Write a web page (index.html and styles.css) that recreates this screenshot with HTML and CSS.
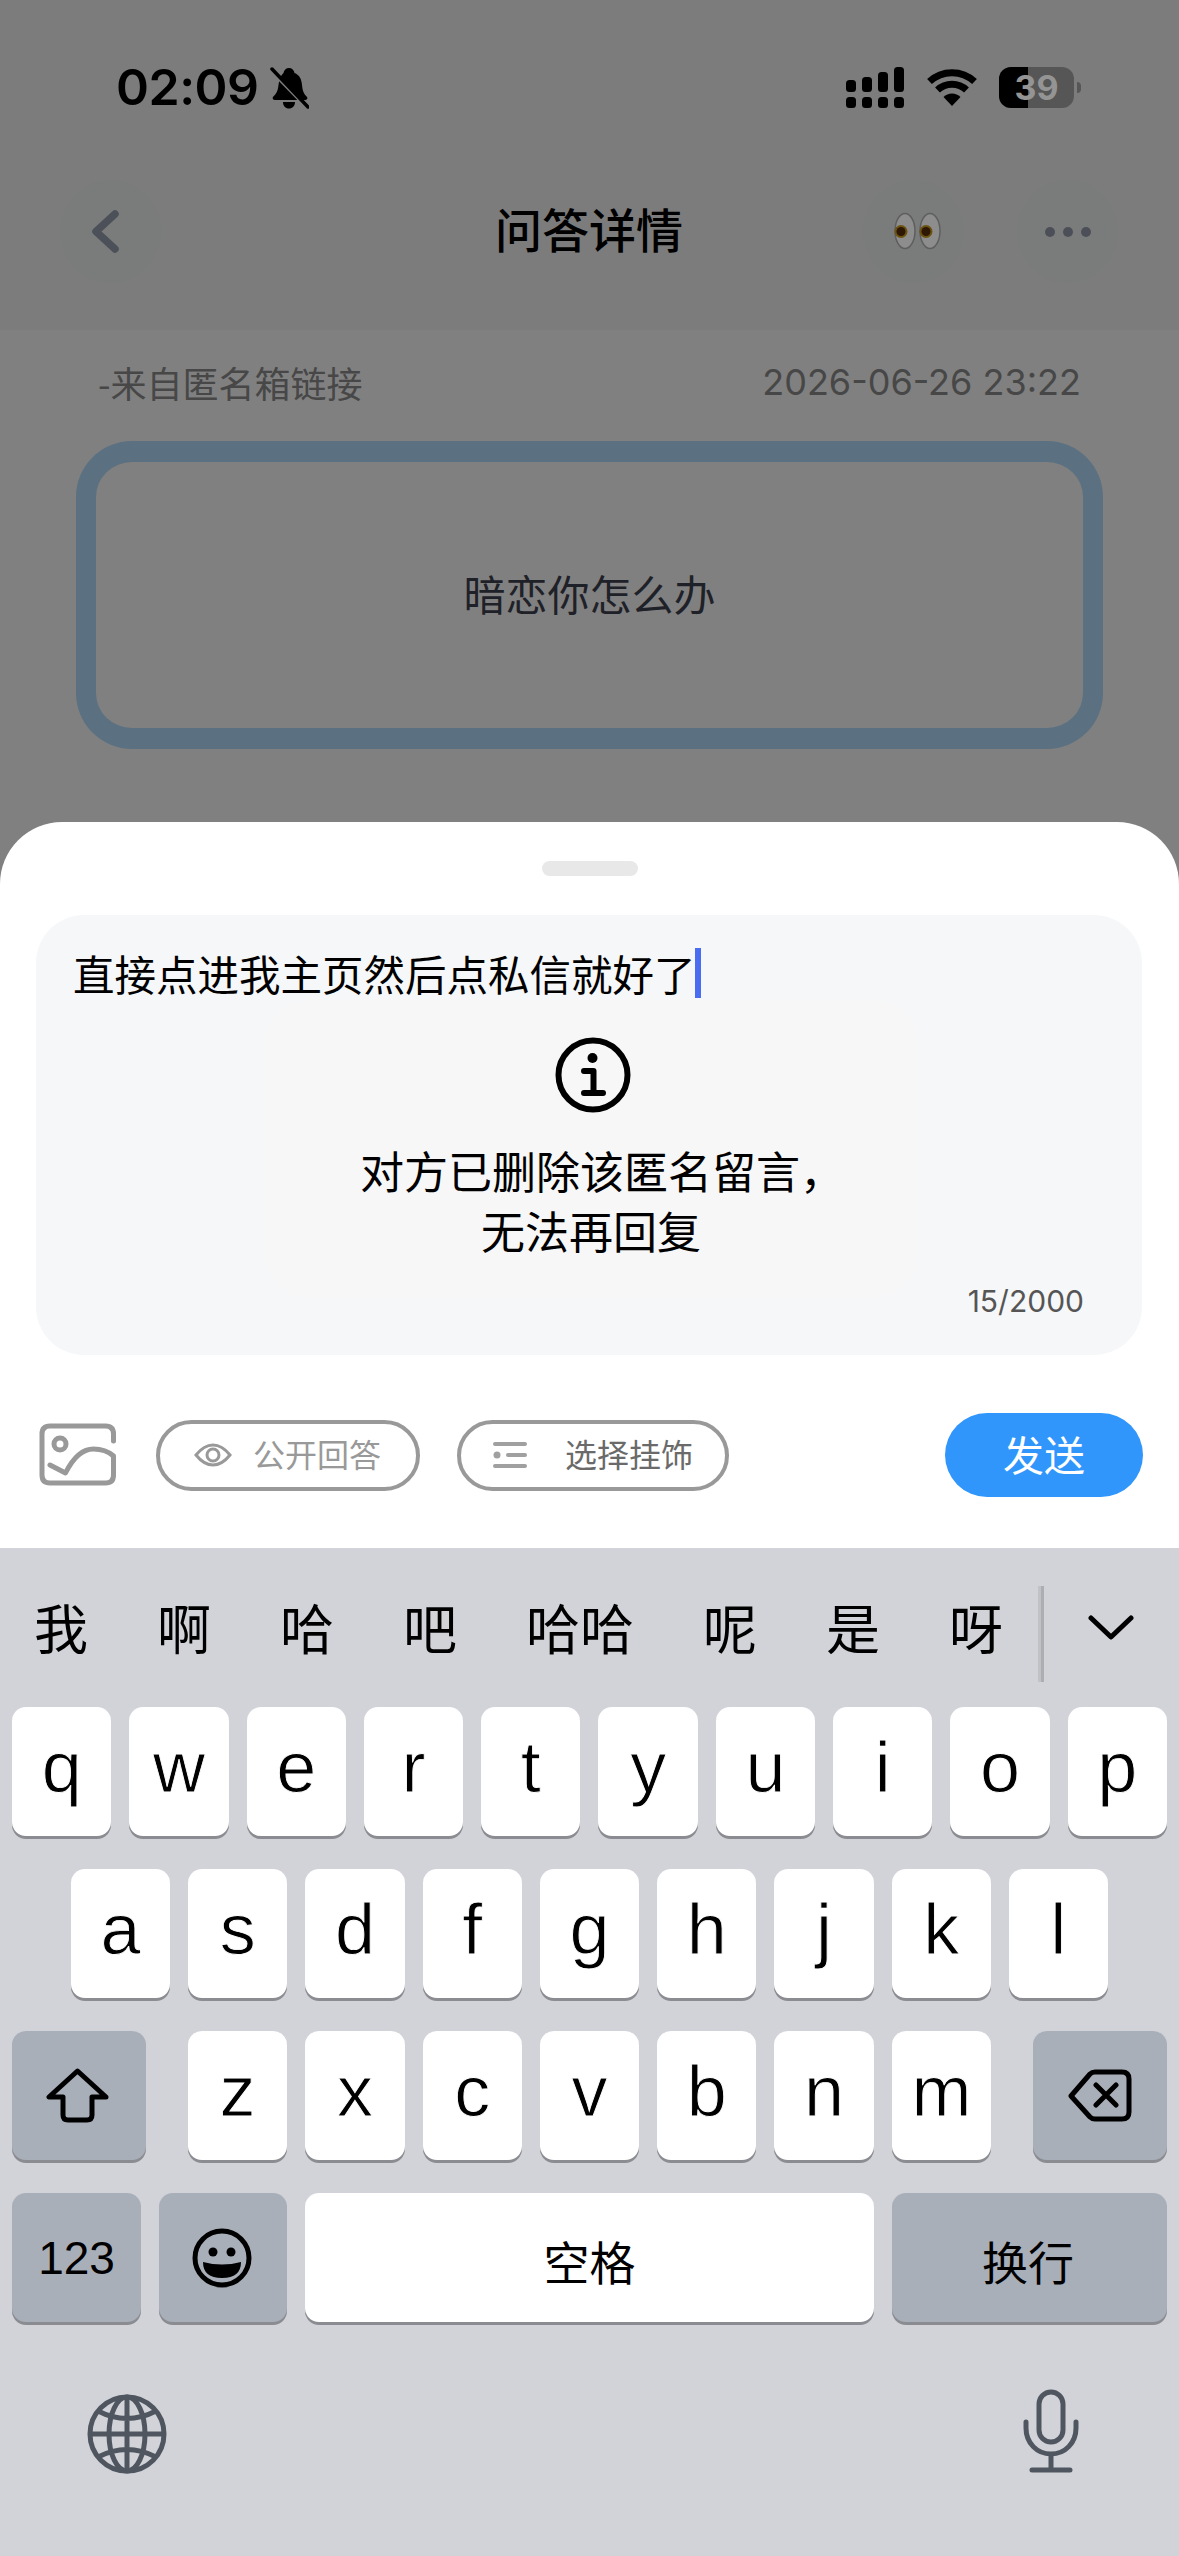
FILE: index.html
```html
<!DOCTYPE html>
<html lang="zh-CN">
<head>
<meta charset="utf-8">
<title>问答详情</title>
<link rel="stylesheet" href="styles.css">
</head>
<body>
<header class="top">
  <div class="statusbar">
    <div class="status-left">
      <span class="time">02:09</span>
      <svg class="bell" viewBox="0 0 39 42"><path d="M19 1c3 0 5 2 5.500 5 5 2 7 6 7.500 12 .5 6 2 9 5 12 1 1.500 0 3-2 3H5c-2 0-3-1.500-2-3 3-3 5-6 5.500-12C9 12 11 8 13.500 6 14 3 16 1 19 1zM13 35h12c0 4-2.500 6.500-6 6.500S13 39 13 35z"/><path class="bell-gap" d="M-1 1l37 38"/><path class="bell-slash" d="M2 2l36 38"/></svg>
    </div>
    <div class="status-right">
      <svg class="signal" viewBox="0 0 58 41"><rect x="0" y="13" width="10" height="12" rx="3.500"/><rect x="16" y="10" width="10" height="15" rx="3.500"/><rect x="32" y="5" width="10" height="20" rx="3.500"/><rect x="48" y="0" width="10" height="25" rx="3.500"/><rect x="0" y="30" width="10" height="11" rx="3.500"/><rect x="16" y="30" width="10" height="11" rx="3.500"/><rect x="32" y="30" width="10" height="11" rx="3.500"/><rect x="48" y="30" width="10" height="11" rx="3.500"/></svg>
      <svg class="wifi" viewBox="0 0 50 37"><path class="wifi-arc" d="M2.500 12.500a33 33 0 0 1 45 0"/><path class="wifi-arc" d="M10.500 21a21 21 0 0 1 29 0"/><path d="M25 37L16.500 28a12 12 0 0 1 17 0z"/></svg>
      <div class="battery"><div class="battery-body"><div class="battery-fill"></div><span class="battery-num">39</span></div><div class="battery-nub"></div></div>
    </div>
  </div>
  <nav class="nav">
    <div class="nav-side">
      <div class="round">
        <svg class="back" viewBox="0 0 28 43"><path d="M24 4L5 21.500 24 39"/></svg>
      </div>
    </div>
    <h1 class="title">问答详情</h1>
    <div class="nav-side nav-right">
      <div class="round">
        <svg class="eyes" viewBox="0 0 48 38"><ellipse class="eye-white" cx="11" cy="19" rx="10" ry="17.500"/><ellipse class="eye-white" cx="36" cy="19" rx="10" ry="17.500"/><circle class="iris" cx="7" cy="19.500" r="6.500"/><circle class="iris" cx="32" cy="19.500" r="6.500"/><circle class="pupil" cx="7" cy="19.500" r="4.500"/><circle class="pupil" cx="32" cy="19.500" r="4.500"/></svg>
      </div>
      <div class="round">
        <div class="dots"><i></i><i></i><i></i></div>
      </div>
    </div>
  </nav>
</header>

<main class="main">
  <div class="meta"><span>-来自匿名箱链接</span><span class="date">2026-06-26 23:22</span></div>
  <div class="card"><span class="card-text">暗恋你怎么办</span></div>
</main>

<section class="sheet">
  <div class="handle"></div>
  <div class="editor">
    <div class="editor-text"><span>直接点进我主页然后点私信就好了</span><i class="caret"></i></div>
    <div class="counter">15/2000</div>
    <div class="toast">
      <svg class="info" viewBox="0 0 76 76"><circle cx="38" cy="38" r="34.500"/><circle class="info-dot" cx="37.500" cy="21" r="5"/><path d="M29 34h9.500v22M29 56h19"/></svg>
      <p>对方已删除该匿名留言，<br>无法再回复</p>
    </div>
  </div>
  <div class="toolbar">
    <svg class="image-icon" viewBox="0 0 77 63"><path d="M74.500 18V11q0-8-8-8H11q-8 0-8 8v41q0 8 8 8h55.500q8 0 8-8V33q-8-7-20-7-16 0-28 24L11 42"/><circle cx="21" cy="21" r="6"/></svg>
    <div class="pill pill-public">
      <svg class="eye-icon" viewBox="0 0 38 24"><path d="M2 12Q10 2 19 2t17 10Q28 22 19 22T2 12z"/><circle cx="19" cy="12" r="6"/></svg>
      <span class="pill-text">公开回答</span>
    </div>
    <div class="pill pill-deco">
      <svg class="list-icon" viewBox="0 0 34 26"><rect x="0" y="0" width="34" height="4" rx="2"/><circle cx="4" cy="13" r="3.500"/><rect x="13" y="11" width="21" height="4" rx="2"/><rect x="0" y="22" width="34" height="4" rx="2"/></svg>
      <span class="pill-text">选择挂饰</span>
    </div>
    <div class="send"><span class="pill-text">发送</span></div>
  </div>
</section>

<section class="keyboard">
  <div class="candidates">
    <span>我</span><span>啊</span><span>哈</span><span>吧</span><span>哈哈</span><span>呢</span><span>是</span><span>呀</span>
    <i class="cand-divider"></i>
    <svg class="chevron" viewBox="0 0 46 25"><path d="M3 3l20 19L43 3"/></svg>
  </div>
  <div class="row row-1">
    <div class="key">q</div><div class="key">w</div><div class="key">e</div><div class="key">r</div><div class="key">t</div><div class="key">y</div><div class="key">u</div><div class="key">i</div><div class="key">o</div><div class="key">p</div>
  </div>
  <div class="row row-2">
    <div class="key">a</div><div class="key">s</div><div class="key">d</div><div class="key">f</div><div class="key">g</div><div class="key">h</div><div class="key">j</div><div class="key">k</div><div class="key">l</div>
  </div>
  <div class="row row-3">
    <div class="key key-dark key-side">
      <svg class="shift" viewBox="0 0 63 55"><path d="M31.500 3L3 29H17V47q0 5 5 5H41q5 0 5-5V29H60z"/></svg>
    </div>
    <div class="letters">
      <div class="key">z</div><div class="key">x</div><div class="key">c</div><div class="key">v</div><div class="key">b</div><div class="key">n</div><div class="key">m</div>
    </div>
    <div class="key key-dark key-side">
      <svg class="delete" viewBox="0 0 64 53"><path d="M3 27L22 5q2-2 5-2H54q7 0 7 7V43q0 7-7 7H27q-3 0-5-2zM28 16l20 20M48 16L28 36"/></svg>
    </div>
  </div>
  <div class="row row-4">
    <div class="key key-dark key-123">123</div>
    <div class="key key-dark key-emoji">
      <svg class="smile" viewBox="0 0 60 60"><circle cx="30" cy="30" r="27"/><circle class="smile-fill" cx="21" cy="24" r="4.500"/><circle class="smile-fill" cx="39" cy="24" r="4.500"/><path class="smile-fill" d="M11 34q19 5 38 0q0 16-19 16T11 34z"/></svg>
    </div>
    <div class="key key-space">空格</div>
    <div class="key key-dark key-return">换行</div>
  </div>
  <div class="kb-footer">
    <svg class="globe" viewBox="0 0 80 80"><circle cx="40" cy="40" r="37"/><ellipse cx="40" cy="40" rx="18" ry="37"/><path d="M40 3V77M3 40H77M11 17q29 15 58 0M11 63q29-15 58 0"/></svg>
    <svg class="mic" viewBox="0 0 56 84"><rect x="16" y="3" width="24" height="50" rx="12"/><path d="M3 33v6c0 15 11 26 25 26s25-11 25-26v-6M28 65v16M9 81h38"/></svg>
  </div>
</section>
</body>
</html>
```

FILE: styles.css
```css
* { box-sizing: border-box; }
html, body { margin: 0; padding: 0; }
body {
  width: 1179px;
  height: 2556px;
  overflow: hidden;
  display: flex;
  flex-direction: column;
  background: #808080;
  font-family: "Noto Sans CJK SC", "Inter", sans-serif;
  color: #000;
}

/* header */
.top { height: 330px; background: #7c7c7c; }
.statusbar {
  height: 180px;
  padding: 67px 98px 0 116px;
  display: flex;
  justify-content: space-between;
  align-items: flex-start;
}
.status-left { display: flex; align-items: flex-start; gap: 11px; }
.time {
  font-family: "Inter", sans-serif;
  font-size: 50px;
  font-weight: 600;
  line-height: 41px;
  letter-spacing: -0.5px;
}
.bell { width: 39px; height: 42px; }
.bell-gap { stroke: #7c7c7c; stroke-width: 4; fill: none; }
.bell-slash { stroke: #000; stroke-width: 3.500; fill: none; stroke-linecap: round; }
.status-right { display: flex; align-items: flex-start; }
.signal { width: 58px; height: 41px; margin-right: 23px; }
.wifi { width: 50px; height: 37px; margin: 2px 22px 0 0; }
.wifi-arc { fill: none; stroke: #000; stroke-width: 7; }
.battery { display: flex; align-items: center; }
.battery-body {
  position: relative;
  width: 75px;
  height: 41px;
  border-radius: 12px;
  background: #565656;
  overflow: hidden;
  display: flex;
  align-items: center;
  justify-content: center;
}
.battery-fill { position: absolute; left: 0; top: 0; bottom: 0; width: 29px; background: #000; }
.battery-num {
  position: relative;
  font-family: "Inter", sans-serif;
  font-size: 34px;
  font-weight: 700;
  line-height: 41px;
  color: #949494;
}
.battery-nub { width: 4px; height: 11px; margin-left: 3px; background: #565656; border-radius: 0 5px 5px 0; }

.nav {
  height: 103px;
  padding: 0 61px 0 60px;
  display: grid;
  grid-template-columns: 1fr auto 1fr;
  align-items: center;
}
.nav-side { display: flex; }
.nav-right { justify-content: flex-end; gap: 53px; }
.round {
  width: 101px;
  height: 103px;
  border-radius: 50%;
  background: #7a7c7c;
  display: flex;
  align-items: center;
  justify-content: center;
}
.back { width: 28px; height: 43px; margin-left: -12px; }
.back path { fill: none; stroke: #4c5058; stroke-width: 7.500; stroke-linecap: round; stroke-linejoin: round; }
.title { margin: 0 0 7px; font-size: 47px; font-weight: 500; line-height: 60px; color: #000; }
.eyes { width: 48px; height: 38px; margin: -2px 0 0 9px; }
.eye-white { fill: #8d8d8d; stroke: #5e5e5e; stroke-width: 1.500; }
.iris { fill: #6d5310; }
.pupil { fill: #2e1803; }
.dots { display: flex; gap: 8px; }
.dots i { width: 10px; height: 10px; border-radius: 50%; background: #4d4f58; }

/* main */
.main { height: 492px; padding-top: 32px; }
.meta {
  height: 40px;
  padding: 0 98px;
  display: flex;
  justify-content: space-between;
  align-items: center;
  font-size: 36px;
  line-height: 40px;
  color: #474747;
}
.date { font-family: "Inter", sans-serif; font-size: 36px; }
.card {
  margin: 39px 76px 0;
  height: 308px;
  border: solid #5b7080;
  border-width: 21px 20px;
  border-radius: 56px;
  display: flex;
  align-items: center;
  justify-content: center;
  font-size: 42px;
  color: #1f2128;
}
.card-text { margin-bottom: 6px; }

/* sheet */
.sheet {
  height: 726px;
  background: #fff;
  border-radius: 62px 62px 0 0;
  padding-top: 39px;
}
.handle { width: 96px; height: 15px; margin: 0 auto; border-radius: 8px; background: #e8e8e8; }
.editor {
  position: relative;
  margin: 39px 37px 0 36px;
  height: 440px;
  border-radius: 48px;
  background: #f6f7f9;
  padding: 33px 58px 0 37px;
  display: flex;
  flex-direction: column;
}
.editor-text {
  display: flex;
  align-items: center;
  font-size: 41.500px;
  line-height: 50px;
  color: #000;
}
.caret { width: 6px; height: 50px; margin-left: -1px; background: #4a6cf0; }
.counter {
  margin-top: auto;
  margin-bottom: 41px;
  text-align: right;
  font-family: "Inter", sans-serif;
  font-size: 30px;
  line-height: 26px;
  color: #555;
}
.toast {
  position: absolute;
  left: 229px;
  top: 84px;
  width: 652px;
  height: 299px;
  border-radius: 44px;
  background: #f7f7f7;
  display: flex;
  flex-direction: column;
  align-items: center;
  padding-top: 38px;
}
.info { width: 76px; height: 76px; margin-left: 3px; fill: none; stroke: #000; stroke-width: 6; stroke-linecap: round; stroke-linejoin: round; }
.info-dot { fill: #000; stroke: none; }
.toast p { margin: 27px 0 0; text-align: center; text-indent: 22px; font-size: 44px; line-height: 60px; color: #000; }

.toolbar {
  margin-top: 58px;
  padding: 0 36px 0 39px;
  display: flex;
  align-items: center;
}
.image-icon { width: 77px; height: 63px; margin-top: -2px; fill: none; stroke: #999; stroke-width: 5; stroke-linecap: round; stroke-linejoin: round; }
.pill {
  height: 71px;
  border: 4px solid #999;
  border-radius: 36px;
  display: flex;
  align-items: center;
  font-size: 32px;
}
.pill-text { margin-bottom: 5px; }
.pill-public { width: 264px; margin-left: 40px; padding-left: 34px; color: #999; gap: 21px; }
.pill-deco { width: 272px; margin-left: 37px; padding-left: 32px; color: #6a6a6a; gap: 38px; }
.eye-icon { width: 38px; height: 24px; fill: none; stroke: #999; stroke-width: 3; }
.list-icon { width: 34px; height: 26px; fill: #a0a0a0; }
.send {
  margin-left: auto;
  width: 198px;
  height: 84px;
  border-radius: 42px;
  background: #3096fb;
  color: #fff;
  font-size: 41px;
  display: flex;
  align-items: center;
  justify-content: center;
}

/* keyboard */
.keyboard { flex: 1; background: #d1d3d9; }
.candidates {
  height: 159px;
  padding: 0 0 2px 34px;
  display: flex;
  align-items: center;
  gap: 69px;
  font-size: 54px;
  line-height: 60px;
}
.cand-divider {
  width: 6px;
  height: 96px;
  margin: 14px 0 0 -34px;
  background: linear-gradient(90deg, #c0c2c6 50%, #adaeb3 50%);
}
.chevron { width: 46px; height: 25px; margin: 2px 0 0 -25px; fill: none; stroke: #000; stroke-width: 5; stroke-linecap: round; stroke-linejoin: round; }
.row { height: 129px; margin-bottom: 33px; display: flex; gap: 18px; }
.row-1 { padding: 0 12px; }
.row-2 { padding: 0 71px; }
.row-3 { padding: 0 12px; justify-content: space-between; }
.row-4 { padding: 0 12px; }
.row-1 .key, .row-2 .key { flex: 1; }
.letters { display: flex; gap: 18px; }
.letters .key { width: 99.300px; }
.key {
  border-radius: 14px;
  background: #fff;
  box-shadow: 0 3px 0 #8b8c91;
  display: flex;
  align-items: center;
  justify-content: center;
  font-family: "Liberation Sans", sans-serif;
  font-size: 72px;
  line-height: 1;
  padding-bottom: 10px;
  -webkit-text-stroke: 0.9px #fff;
}
.key-dark { background: #a9afb9; -webkit-text-stroke: 0; }
.key-side { width: 134px; padding: 0; }
.key-123 { width: 129px; font-size: 46px; padding: 0; }
.key-emoji { width: 128px; padding: 0 3px 0 0; }
.key-space { width: 569px; font-family: "Noto Sans CJK SC", sans-serif; font-size: 46px; padding: 4px 0 0; -webkit-text-stroke: 0; }
.key-return { width: 275px; font-family: "Noto Sans CJK SC", sans-serif; font-size: 46px; padding: 4px 3px 0 0; }
.shift { width: 63px; height: 55px; margin-right: 3px; fill: none; stroke: #000; stroke-width: 5; stroke-linejoin: round; }
.delete { width: 64px; height: 53px; fill: none; stroke: #000; stroke-width: 5; stroke-linejoin: round; stroke-linecap: round; }
.smile { width: 60px; height: 60px; fill: none; stroke: #000; stroke-width: 5; }
.smile-fill { fill: #000; stroke: none; }
.kb-footer {
  margin-top: 67px;
  padding: 0 100px 0 87px;
  display: flex;
  justify-content: space-between;
  align-items: flex-start;
}
.globe { width: 80px; height: 80px; margin-top: 5px; fill: none; stroke: #50565f; stroke-width: 5; }
.mic { width: 56px; height: 84px; fill: none; stroke: #50565f; stroke-width: 5; stroke-linecap: round; }
```
